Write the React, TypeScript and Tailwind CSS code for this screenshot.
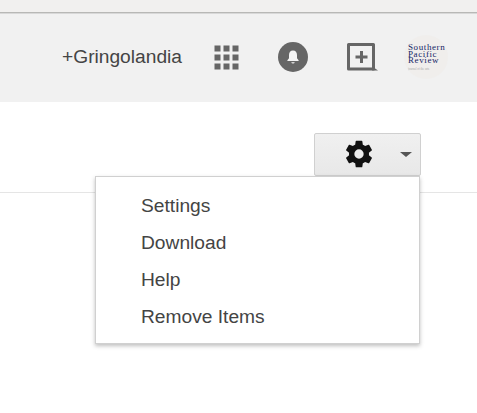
export default function App() {
  return (
    <div className="w-[477px] h-[413px] bg-white overflow-hidden font-['Liberation_Sans',Arial,sans-serif] relative">
      <div className="h-[12px] bg-[#f1f0ef]" />
      <div className="h-[2px] bg-[#b8b8b6] border-b border-[#d8d8d8]" />
      <header className="h-[88px] bg-[#f1f1f1] flex items-center pl-[62px] pb-[3px]">
        <span className="text-[19.2px] leading-[22px] text-[#444] w-[152px] shrink-0">+Gringolandia</span>
        <svg width="25" height="25" viewBox="0 0 25 25" className="shrink-0 mt-[1px]" fill="#666">
          {[0, 9, 18].map((y) => [0, 9, 18].map((x) => <rect key={`${x}-${y}`} x={x + 0.5} y={y + 0.5} width="6" height="6" />))}
        </svg>
        <svg width="30" height="30" viewBox="0 0 30 30" className="ml-[39px] shrink-0 mt-[1px]">
          <circle cx="15" cy="15" r="15" fill="#666" />
          <path d="M15 8.5c-2.6 0-4 2-4 4.4v3.3l-1.6 2v.8h11.2v-.8l-1.6-2v-3.3c0-2.4-1.4-4.4-4-4.4z M13.2 20.3a1.9 1.9 0 0 0 3.6 0z" fill="#f4f4f4" />
        </svg>
        <svg width="32" height="29" viewBox="0 0 32 29" className="ml-[39px] shrink-0 mt-[1px]">
          <path d="M1.5 1.5h25v24.500h-25z" fill="none" stroke="#666" strokeWidth="3" strokeLinejoin="round" />
          <path d="M26 24l5 3.500h-6z" fill="#666" />
          <path d="M13 8h3v4.500h4.500v3H16V20h-3v-4.500H8.500v-3H13z" fill="#666" />
        </svg>
        <div className="ml-[25px] w-[44px] h-[44px] rounded-full bg-[#f0eeec] shrink-0 flex items-center pl-[4px] pt-[3px] overflow-hidden">
          <p className="font-['Liberation_Serif',serif] text-[#141f66] text-[9px] leading-[6.5px] tracking-[0.6px] whitespace-nowrap">
            Southern<br />Pacific<br />Review<br />
            <span className="text-[3px] text-[#aaa] tracking-normal">journal of the arts</span>
          </p>
        </div>
      </header>
      <main className="h-[91px] border-b border-[#e5e5e5] flex justify-end items-start pt-[31px] pr-[56px]">
        <button className="w-[107px] h-[43px] rounded-[2px] border border-[#d0d0d0] bg-gradient-to-b from-[#f0f0f0] to-[#e8e8e8] flex items-center pl-[28px]">
          <svg width="32" height="32" viewBox="0 0 24 24" fill="#111" className="shrink-0 mt-[-2px]">
            <path d="M19.43 12.98c.04-.32.07-.64.07-.98s-.03-.66-.07-.98l2.11-1.65a.5.5 0 0 0 .12-.64l-2-3.46a.5.5 0 0 0-.61-.22l-2.49 1a7.3 7.3 0 0 0-1.69-.98l-.38-2.65A.49.49 0 0 0 14 2h-4a.49.49 0 0 0-.49.42l-.38 2.65c-.61.25-1.17.59-1.69.98l-2.49-1a.49.49 0 0 0-.61.22l-2 3.46a.49.49 0 0 0 .12.64l2.11 1.65c-.04.32-.07.65-.07.98s.03.66.07.98l-2.11 1.65a.5.5 0 0 0-.12.64l2 3.46c.12.22.39.3.61.22l2.49-1c.52.4 1.08.73 1.69.98l.38 2.65c.03.24.24.42.49.42h4c.25 0 .46-.18.49-.42l.38-2.65c.61-.25 1.17-.59 1.69-.98l2.49 1c.23.09.49 0 .61-.22l2-3.46a.5.5 0 0 0-.12-.64zM12 15.500a3.500 3.500 0 1 1 0-7 3.500 3.500 0 0 1 0 7z" />
          </svg>
          <span className="ml-[25px] w-0 h-0 border-x-[6px] border-x-transparent border-t-[5px] border-t-[#555]" />
        </button>
      </main>
      <ul className="absolute left-[95px] top-[176px] w-[325px] h-[168px] bg-white border border-[#d0d0d0] shadow-[0_2px_4px_rgba(0,0,0,0.25)] py-[10px] text-[19.2px] leading-[37px] text-[#444]">
        {["Settings", "Download", "Help", "Remove Items"].map((t) => (
          <li key={t} className="pl-[45px]">{t}</li>
        ))}
      </ul>
    </div>
  );
}
